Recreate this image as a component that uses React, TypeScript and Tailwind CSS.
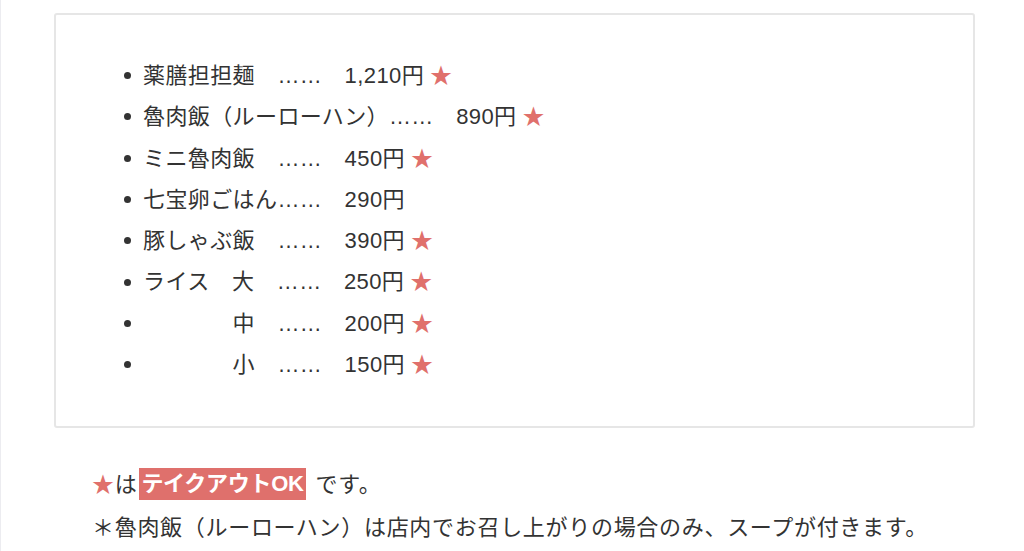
import React from "react";

const Star = () => <span className="text-[#e0706c]">★</span>;

const rows: { label: string; price: string; star: boolean }[] = [
  { label: "薬膳担担麺　……　", price: "1,210円", star: true },
  { label: "魯肉飯（ルーローハン）……　", price: "890円", star: true },
  { label: "ミニ魯肉飯　……　", price: "450円", star: true },
  { label: "七宝卵ごはん……　", price: "290円", star: false },
  { label: "豚しゃぶ飯　……　", price: "390円", star: true },
  { label: "ライス　大　……　", price: "250円", star: true },
  { label: "　　　　中　……　", price: "200円", star: true },
  { label: "　　　　小　……　", price: "150円", star: true },
];

export default function App() {
  return (
    <div
      className="w-[1024px] h-[551px] overflow-hidden bg-white border-l border-[#ececf0] text-[#333] text-[22px]"
      style={{ fontFamily: '"Liberation Sans", "Noto Sans CJK JP", sans-serif' }}
    >
      <div className="ml-[53px] mt-[13px] w-[921px] h-[415px] border-2 border-[#e6e6e6] rounded-[3px] pt-[40px]">
        <ul className="flex flex-col tracking-[0.4px]">
          {rows.map((r, i) => (
            <li key={i} className="flex items-center h-[41.3px] leading-[41.3px] whitespace-pre">
              <span className="ml-[68px] mr-[12px] w-[7px] h-[7px] rounded-full bg-[#333] shrink-0" />
              <span>{r.label}</span>
              <span>{r.price}</span>
              {r.star && (
                <span className="ml-[6px]">
                  <Star />
                </span>
              )}
            </li>
          ))}
        </ul>
      </div>
      <div className="ml-[91px] mt-[35px] flex flex-col tracking-[0.7px]">
        <p className="flex items-center h-[42px] whitespace-pre">
          <Star />
          <span>は</span>
          <span className="ml-[2px] h-[32px] px-[2px] bg-[#df706c] text-white font-bold leading-[32px] tracking-[-0.3px]">テイクアウトOK</span>
          <span className="ml-[10px]">です。</span>
        </p>
        <p className="mt-[2px] h-[42px] leading-[42px] whitespace-pre">＊魯肉飯（ルーローハン）は店内でお召し上がりの場合のみ、スープが付きます。</p>
      </div>
    </div>
  );
}
